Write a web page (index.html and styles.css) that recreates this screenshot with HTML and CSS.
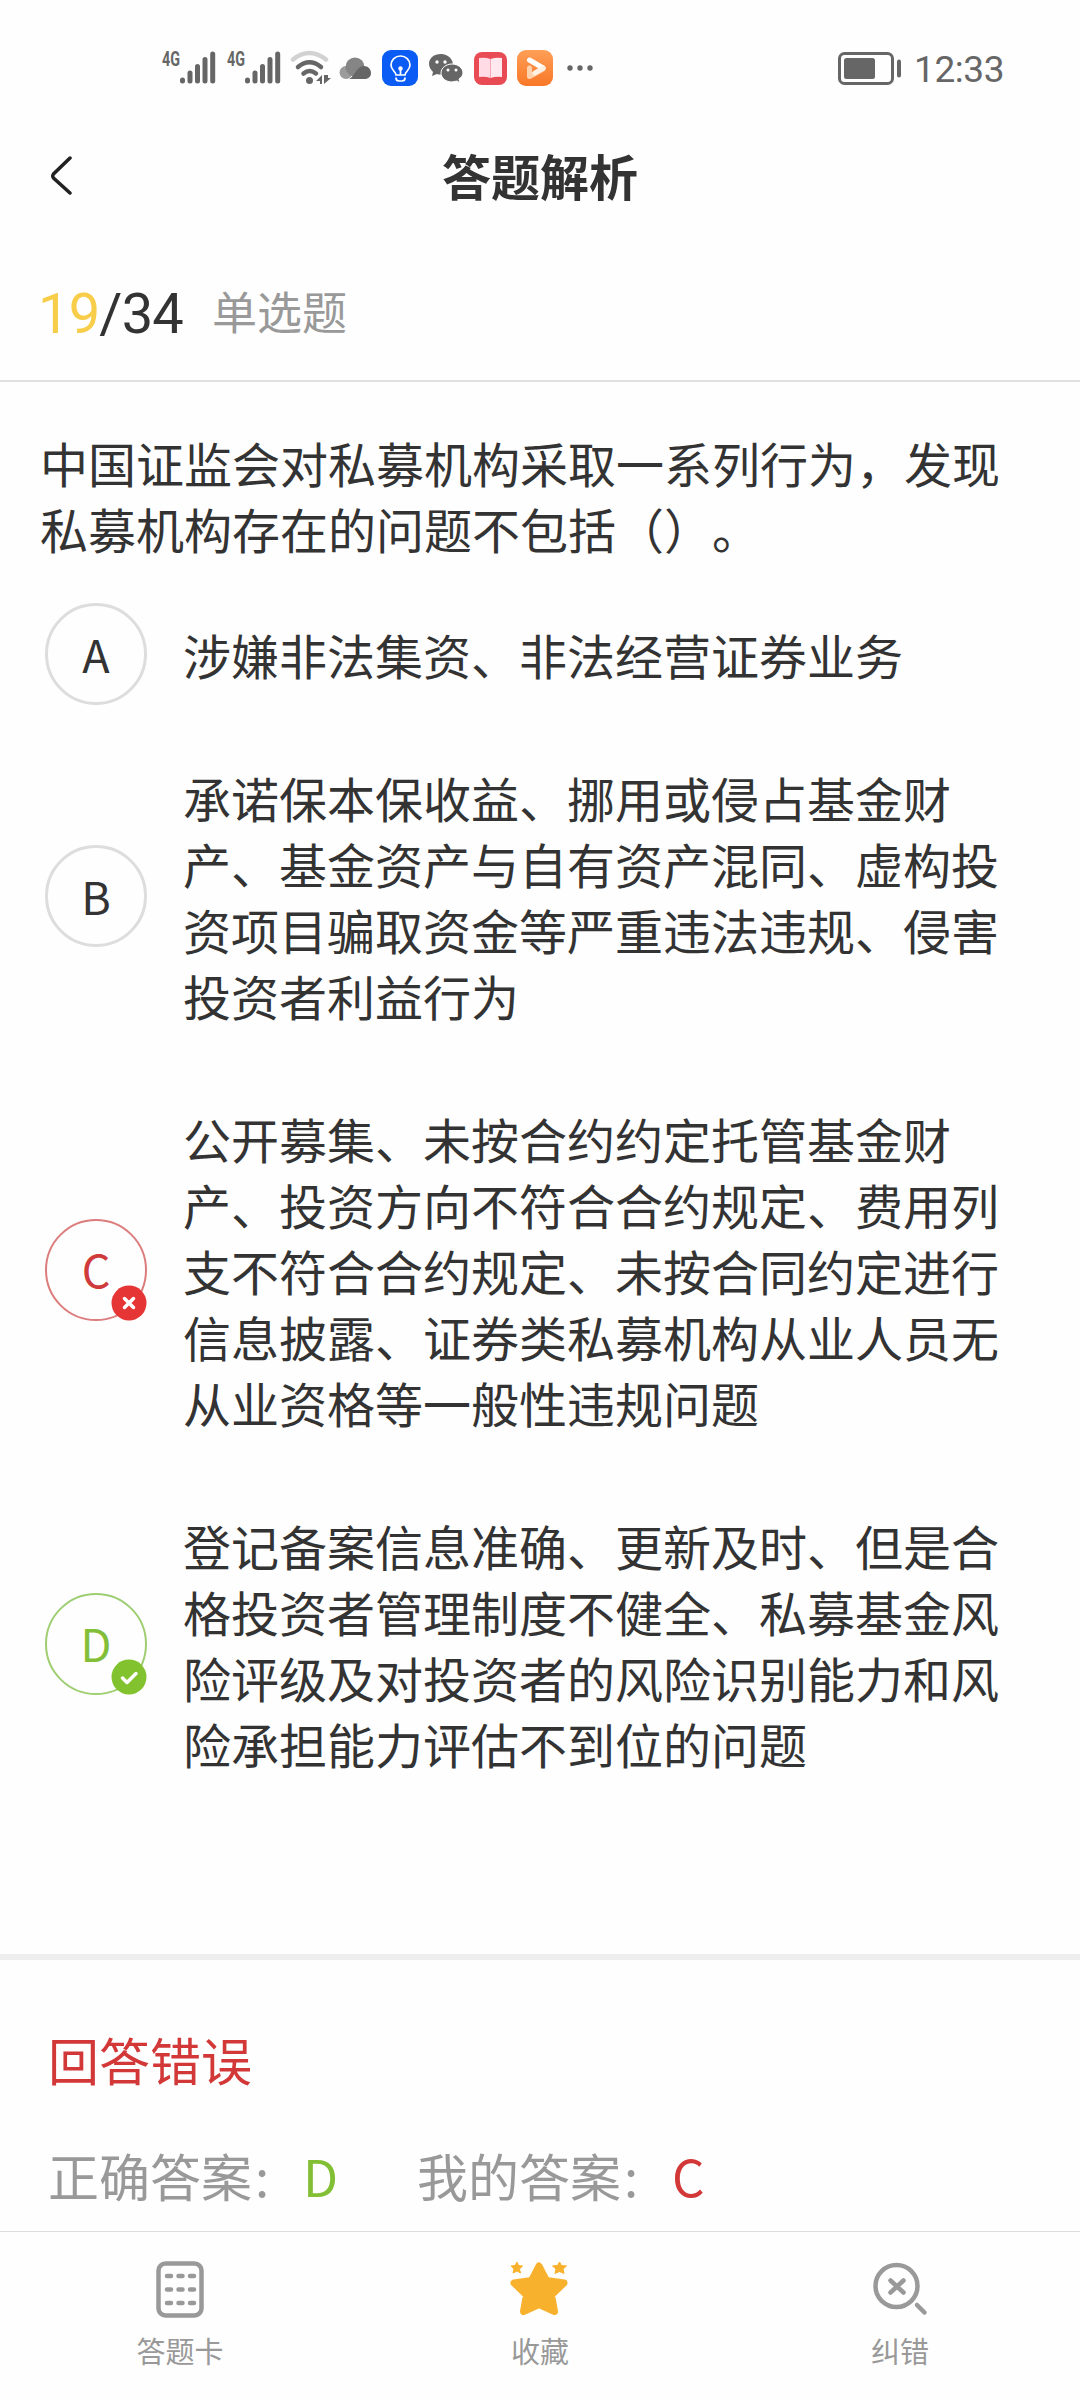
FILE: index.html
```html
<!DOCTYPE html>
<html lang="zh-CN">
    <head>
        <meta charset="UTF-8" />
        <title>答题解析</title>
        <link rel="stylesheet" href="styles.css">
    </head>
    <body>
        <div class="status-bar">
            <div class="status-icons">
                <svg class="signal" width="54" height="42" viewBox="0 -6 54 42">
                    <text x="0" y="15.500" textLength="18" lengthAdjust="spacingAndGlyphs">4G</text>
                    <path d="M20.500 31v-1M28 31v-8M35.500 31V16.500M43 31V9.500M50.700 31V4" />
                </svg>
                <svg class="signal second" width="54" height="42" viewBox="0 -6 54 42">
                    <text x="0" y="15.500" textLength="18" lengthAdjust="spacingAndGlyphs">4G</text>
                    <path d="M20.500 31v-1M28 31v-8M35.500 31V16.500M43 31V9.500M50.700 31V4" />
                </svg>
                <svg class="wifi" width="42" height="36" viewBox="0 0 42 36">
                    <path class="weak" d="M3 9.500Q19 -3.500 36 9.500" />
                    <path d="M8 17Q19.500 7.500 31 17M13.500 23.500Q19.500 18.500 26 23.500" />
                    <circle cx="19.500" cy="30.500" r="3.500" />
                    <path class="arrows" d="M26 31l6-6v9h-2v-3zM34 25v9l7-6h-3v-3z" />
                </svg>
                <svg class="cloud" width="33" height="36" viewBox="0 0 33 36">
                    <circle cx="7" cy="22.500" r="6.500" fill="#9b9b9b" />
                    <circle cx="16" cy="17" r="9.500" fill="#858585" />
                    <path d="M10 29c4-2 5-5 8-9 5-7 14-4 14 3 0 4-3 6-7 6z" fill="#666" />
                </svg>
                <svg class="bulb" width="36" height="36" viewBox="0 0 36 36">
                    <rect width="36" height="36" rx="9" fill="#0b5cf5" />
                    <g fill="none" stroke="#fff" stroke-width="1.700" stroke-linecap="round">
                        <path d="M14 25c0-3-5-5-5-10a9.500 9 0 0 1 19 0c0 5-5 7-5 10zM14 28q0 3 3 3h3q3 0 3-3M18.500 19v6" />
                    </g>
                    <circle cx="18.500" cy="18.500" r="2.200" fill="#fff" />
                </svg>
                <svg class="wechat" width="34" height="36" viewBox="0 0 34 36">
                    <path d="M12 4C5 4 0 8 0 14c0 3 2 6 4 8l-1 4 5-2q3 1 7 0c6 0 9-4 9-9 0-6-5-11-12-11z" fill="#666" />
                    <path d="M23 14c-6 0-11 4-11 9s5 9 11 9l5-1 3 2-1-4c2-2 4-3 4-6 0-5-5-9-11-9z" fill="#666" stroke="#fff" />
                    <g fill="#fff">
                        <circle cx="8" cy="12" r="1.700" />
                        <circle cx="16" cy="12" r="1.700" />
                        <circle cx="19" cy="20" r="1.500" />
                        <circle cx="27" cy="20" r="1.500" />
                    </g>
                </svg>
                <svg class="book" width="33" height="36" viewBox="0 0 33 36">
                    <rect y="2" width="33" height="33" rx="8" fill="#e94b55" />
                    <path d="M5 8q6-1 11.500 1v19Q11 26 5 27z" fill="#ffdce5" />
                    <path d="M28 8q-6-1-11.500 1v19Q22 26 28 27z" fill="#ffe9ee" />
                    <path d="M16.500 9v19" stroke="#f5a9b8" />
                </svg>
                <svg class="play" width="36" height="36" viewBox="0 0 36 36">
                    <defs>
                        <linearGradient id="orange" x1="0" y1="0" x2="0" y2="1">
                            <stop offset="0" stop-color="#ff9f57" />
                            <stop offset="1" stop-color="#f87727" />
                        </linearGradient>
                    </defs>
                    <rect width="36" height="36" rx="9" fill="url(#orange)" />
                    <g fill="none" stroke-width="5" stroke-linecap="round" stroke-linejoin="round">
                        <path d="M12.500 18v8.500L26 19" stroke="#ffd2ae" />
                        <path d="M12.500 10L26 18" stroke="#fff" />
                        <path d="M26 18l-8 5" stroke="#fff0e2" />
                    </g>
                </svg>
                <svg class="more" width="26" height="36" viewBox="0 0 26 36">
                    <circle cx="3" cy="18" r="2.700" />
                    <circle cx="13" cy="18" r="2.700" />
                    <circle cx="23" cy="18" r="2.700" />
                </svg>
            </div>
            <div class="status-right">
                <svg width="64" height="34" viewBox="0 0 64 34">
                    <rect x="1.500" y="1.500" width="53" height="30" rx="5" fill="none" stroke="#666" stroke-width="3" />
                    <rect x="6" y="6" width="31" height="21" rx="2.500" fill="#666" />
                    <path d="M61 9.500v14" stroke="#666" stroke-width="4" stroke-linecap="round" />
                </svg>
                <span class="time">12:33</span>
            </div>
        </div>

        <header class="title-bar">
            <svg class="back" width="24" height="40" viewBox="0 0 24 40">
                <path d="M20 2L3.500 18q-1.500 2 0 4L20 37" />
            </svg>
            <h1>答题解析</h1>
        </header>

        <div class="progress">
            <div class="count"><span class="current">19</span>/34</div>
            <div class="type">单选题</div>
        </div>

        <main class="question">
            <p class="stem">中国证监会对私募机构采取一系列行为，发现<br />私募机构存在的问题不包括（）。</p>
            <div class="options">
                <div class="option">
                    <div class="letter">A</div>
                    <p>涉嫌非法集资、非法经营证券业务</p>
                </div>
                <div class="option">
                    <div class="letter">B</div>
                    <p>承诺保本保收益、挪用或侵占基金财<br />产、基金资产与自有资产混同、虚构投<br />资项目骗取资金等严重违法违规、侵害<br />投资者利益行为</p>
                </div>
                <div class="option">
                    <div class="letter wrong">
                        C
                        <svg class="badge" width="36" height="36" viewBox="0 0 36 36">
                            <circle cx="18" cy="18" r="17.500" fill="#e63535" />
                            <path d="M13.500 13.500l9 9M22.500 13.500l-9 9" />
                        </svg>
                    </div>
                    <p>公开募集、未按合约约定托管基金财<br />产、投资方向不符合合约规定、费用列<br />支不符合合约规定、未按合同约定进行<br />信息披露、证券类私募机构从业人员无<br />从业资格等一般性违规问题</p>
                </div>
                <div class="option">
                    <div class="letter right">
                        D
                        <svg class="badge" width="36" height="36" viewBox="0 0 36 36">
                            <circle cx="18" cy="18" r="17.500" fill="#82c22f" />
                            <path d="M11.500 19l4.500 4.500 9-9" />
                        </svg>
                    </div>
                    <p>登记备案信息准确、更新及时、但是合<br />格投资者管理制度不健全、私募基金风<br />险评级及对投资者的风险识别能力和风<br />险承担能力评估不到位的问题</p>
                </div>
            </div>
        </main>

        <section class="result">
            <h2>回答错误</h2>
            <div class="answers">
                <div class="answer"><span class="label">正确答案</span><span class="colon">:</span><span class="green">D</span></div>
                <div class="answer"><span class="label">我的答案</span><span class="colon">:</span><span class="red">C</span></div>
            </div>
        </section>

        <nav class="tabs">
            <div class="tab">
                <svg width="60" height="60" viewBox="0 0 60 60">
                    <rect x="8.500" y="4.500" width="43" height="52" rx="7" fill="none" stroke="#999" stroke-width="4.500" />
                    <path d="M17 17h4M28.500 17h4M40 17h4M17 30.500h4M28.500 30.500h4M40 30.500h4M17 44h4M28.500 44h4M40 44h4" stroke="#999" stroke-width="4.500" stroke-linecap="round" />
                </svg>
                <span>答题卡</span>
            </div>
            <div class="tab">
                <svg width="60" height="60" viewBox="0 0 60 60">
                    <g fill="#f8b12c" stroke="#f8b12c" stroke-linejoin="round">
                        <path d="M29 7l7.500 14.500 17.500 2.500-12.500 12 3 16.500-15.500-7-15.500 7 3-16.500-12.500-12 17.500-2.500z" stroke-width="7" />
                        <path d="M7 3l1.500 3.500 4 .500-3 3 1 4L7 12l-4 2 1-4-3-3 4-.500z" stroke-width="1" />
                        <path d="M49.500 3l2 3.500 5 .500-3.500 3 1 4.500-4.500-2-4.500 2 1-4.500-3.500-3 5-.500z" stroke-width="1" />
                    </g>
                </svg>
                <span>收藏</span>
            </div>
            <div class="tab">
                <svg width="60" height="60" viewBox="0 0 60 60">
                    <g fill="none" stroke="#999" stroke-linecap="round">
                        <circle cx="26.500" cy="27" r="21" stroke-width="4.500" />
                        <path d="M20.500 21.500l13 12M33.500 21.500l-13 12" stroke-width="4.500" />
                        <path d="M47 46l7.500 7.500" stroke-width="4.500" />
                    </g>
                </svg>
                <span>纠错</span>
            </div>
        </nav>
    </body>
</html>
```
FILE: styles.css
```css
* {
    box-sizing: border-box;
}
body {
    margin: 0;
    width: 1080px;
    height: 2400px;
    overflow: hidden;
    display: flex;
    flex-direction: column;
    background: #fefefe;
    color: #333;
    font-family: "Noto Sans CJK SC", sans-serif;
    text-spacing-trim: space-all;
}
h1,
h2,
p {
    margin: 0;
}
svg {
    display: block;
    flex-shrink: 0;
}

/* status bar */
.status-bar {
    height: 136px;
    display: flex;
    justify-content: space-between;
    padding: 50px 76px 0 162px;
}
.status-icons,
.status-right {
    display: flex;
    height: 36px;
}
.signal {
    margin-top: -6px;
}
.signal text {
    font-family: Roboto, sans-serif;
    font-size: 20px;
    font-weight: bold;
    fill: #666;
}
.signal path {
    stroke: #666;
    stroke-width: 5;
    stroke-linecap: round;
}
.second {
    margin-left: 11px;
}
.wifi {
    margin-left: 9px;
}
.wifi path {
    fill: none;
    stroke: #666;
    stroke-width: 4.5;
    stroke-linecap: round;
}
.wifi .weak {
    stroke: #d2d2d2;
}
.wifi circle,
.wifi .arrows {
    fill: #666;
    stroke: none;
}
.cloud {
    margin-left: 7px;
}
.bulb {
    margin-left: 10px;
}
.wechat {
    margin-left: 11px;
}
.book {
    margin-left: 11px;
}
.play {
    margin-left: 10px;
}
.more {
    margin-left: 14px;
    fill: #666;
}
.status-right {
    padding-top: 2px;
}
.time {
    width: 92px;
    margin-left: 12px;
    margin-right: -2px;
    font-family: Roboto, sans-serif;
    font-size: 37px;
    line-height: 36px;
    letter-spacing: -0.4px;
    color: #666;
}

/* title */
.title-bar {
    height: 120px;
    display: flex;
    align-items: flex-start;
    padding: 20px 50px 0;
}
.title-bar h1 {
    flex: 1;
    padding-right: 24px;
    text-align: center;
    font-size: 49px;
    line-height: 38px;
}
.back path {
    fill: none;
    stroke: #222;
    stroke-width: 3.5;
    stroke-linecap: round;
}

.progress {
    height: 126px;
    display: flex;
    align-items: center;
    gap: 31px;
    padding: 0 38px 14px;
    border-bottom: 2px solid #e0e0e0;
}
.count {
    width: 143px;
    padding-top: 5px;
    font-family: Roboto, sans-serif;
    font-size: 56px;
    line-height: 60px;
    letter-spacing: -0.8px;
}
.current {
    color: #f7cd49;
}
.type {
    font-size: 45px;
    line-height: 60px;
    color: #999;
}

/* question */
.question {
    height: 1572px;
    padding: 47px 40px 0;
}
.stem,
.option p {
    font-size: 48px;
    line-height: 66px;
    white-space: nowrap;
}
.options {
    display: flex;
    flex-direction: column;
    gap: 77px;
    margin-top: 60px;
    padding-left: 5px;
}
.option {
    display: flex;
    align-items: center;
    gap: 36px;
}
.letter {
    position: relative;
    flex-shrink: 0;
    width: 102px;
    height: 102px;
    margin: -18px 0;
    border: 3px solid #ddd;
    border-radius: 50%;
    text-align: center;
    font-size: 45px;
    line-height: 96px;
}
.wrong {
    border: 2px solid #dc7c7c;
    color: #cf3b3b;
}
.right {
    border: 2px solid #9fce72;
    color: #83be38;
}
.badge {
    position: absolute;
    right: -2px;
    bottom: -2px;
}
.badge path {
    fill: none;
    stroke: #fff;
    stroke-width: 3.5;
    stroke-linecap: round;
    stroke-linejoin: round;
}

/* result */
.result {
    height: 277px;
    padding: 71px 48px 0;
    border-top: 6px solid #eee;
}
.result h2 {
    font-size: 51px;
    line-height: 56px;
    font-weight: normal;
    color: #d33838;
}
.answers {
    display: flex;
    margin-top: 60px;
    font-size: 51px;
    line-height: 56px;
}
.answer {
    display: flex;
    width: 369px;
    color: #999;
}
.colon {
    width: 51px;
    padding-left: 3px;
}
.green {
    color: #82bf35;
}
.red {
    color: #d33838;
}

/* bottom tabs */
.tabs {
    height: 169px;
    display: flex;
    border-top: 1px solid #ddd;
}
.tab {
    flex: 1;
    display: flex;
    flex-direction: column;
    align-items: center;
    padding-top: 27px;
    font-size: 29px;
    line-height: 36px;
    color: #999;
}
.tab span {
    margin-top: 13px;
}
```
